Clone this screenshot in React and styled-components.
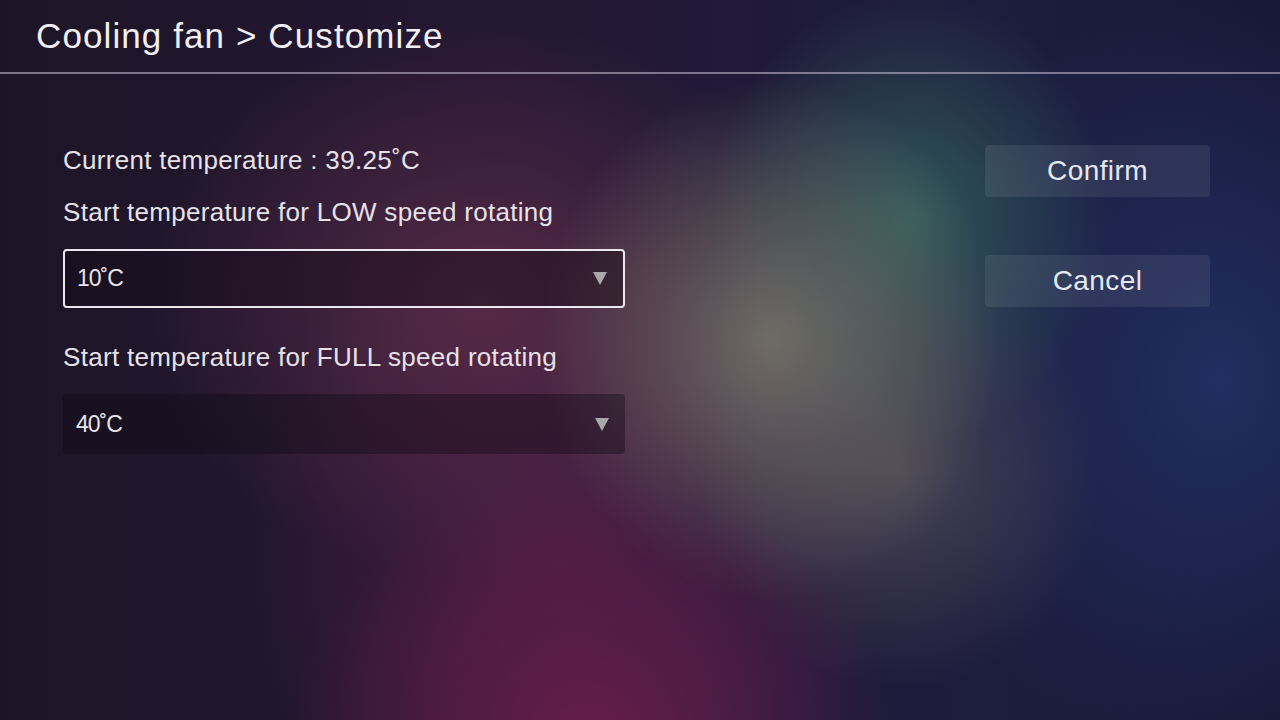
import React from 'react';
import styled, { createGlobalStyle } from 'styled-components';

const GlobalStyle = createGlobalStyle`
	html, body {
		margin: 0;
		padding: 0;
		width: 100%;
		height: 100%;
		overflow: hidden;
	}
	#root {
		height: 100%;
	}
`;

const StyledScreen = styled.div`

	width: 1280px;
	height: 720px;
	display: flex;
	flex-direction: column;
	font-family: 'Liberation Sans', Arial, sans-serif;
	color: #ebe7ee;
	background-color: #1a1530;
	background-image:
		radial-gradient(ellipse 300px 260px at 590px 740px, rgba(104, 28, 78, 0.95), rgba(104, 28, 78, 0) 100%),
		radial-gradient(ellipse 230px 260px at 770px 340px, rgba(122, 120, 108, 0.85), rgba(122, 120, 108, 0) 100%),
		radial-gradient(ellipse 200px 220px at 900px 470px, rgba(100, 96, 100, 0.6), rgba(100, 96, 100, 0) 100%),
		radial-gradient(ellipse 200px 230px at 910px 220px, rgba(52, 100, 96, 0.85), rgba(52, 100, 96, 0) 100%),
		radial-gradient(ellipse 340px 280px at 480px 300px, rgba(100, 48, 76, 0.75), rgba(100, 48, 76, 0) 100%),
		radial-gradient(ellipse 320px 360px at 560px 560px, rgba(82, 30, 72, 0.8), rgba(82, 30, 72, 0) 100%),
		radial-gradient(ellipse 300px 400px at 1220px 380px, rgba(34, 48, 100, 0.9), rgba(34, 48, 100, 0) 100%),
		linear-gradient(90deg, #1d1527 0%, #241733 40%, #1c1d3e 80%, #171735 100%);

`;

const StyledHeader = styled.header`

	height: 72px;
	display: flex;
	align-items: center;
	padding-left: 36px;
	border-bottom: 2px solid rgba(190, 178, 200, 0.6);

`;

const StyledTitle = styled.h1`
	margin: 0;
	font-size: 35px;
	font-weight: normal;
	letter-spacing: 1.1px;
	color: #f2eff4;
`;

const StyledBody = styled.main`

	display: flex;
	justify-content: space-between;
	padding: 70px 70px 0 63px;

`;

const StyledForm = styled.section`

	width: 562px;
	display: flex;
	flex-direction: column;

`;

const StyledLabel = styled.div`
	height: 32px;
	line-height: 32px;
	font-size: 26px;
	letter-spacing: 0.3px;
	color: #e6e2e8;
	margin-top: ${props => props.$gap}px;
`;

const StyledSelect = styled.div`

	box-sizing: border-box;
	height: ${props => props.$active ? 59 : 60}px;
	margin-top: 21px;
	display: flex;
	align-items: center;
	justify-content: space-between;
	padding: 0 16px 0 ${props => props.$active ? 12 : 13}px;
	border-radius: 4px;
	border: ${props => props.$active ? '2px solid #ece6ee' : 'none'};
	background: ${props => props.$active ? 'rgba(20, 12, 22, 0.45)' : 'rgba(16, 10, 20, 0.4)'};
	font-size: 23px;
	letter-spacing: -1px;
	color: #e8e4ea;

`;

const StyledArrow = styled.span`
	width: 0;
	height: 0;
	border-left: 7px solid transparent;
	border-right: 7px solid transparent;
	border-top: 13px solid #aaa6ac;
`;

const StyledActions = styled.aside`

	width: 225px;
	display: flex;
	flex-direction: column;
	gap: 58px;
	padding-top: 1px;

`;

const StyledButton = styled.button`
	height: 52px;
	border: none;
	border-radius: 4px;
	background: rgba(255, 255, 255, 0.08);
	font-family: 'Liberation Sans', Arial, sans-serif;
	font-size: 28px;
	letter-spacing: 0.4px;
	color: #e4e9f0;
	cursor: pointer;
`;

const thresholds = [
	{ label: 'Start temperature for LOW speed rotating', value: '10˚C', active: true, gap: 20 },
	{ label: 'Start temperature for FULL speed rotating', value: '40˚C', active: false, gap: 33 }
];

function App() {

	return (
		<>
			<GlobalStyle />
			<StyledScreen>
				<StyledHeader>
					<StyledTitle>Cooling fan &gt; Customize</StyledTitle>
				</StyledHeader>
				<StyledBody>
					<StyledForm>
						<StyledLabel $gap={0}>Current temperature : 39.25˚C</StyledLabel>
						{thresholds.map(item => (
							<React.Fragment key={item.label}>
								<StyledLabel $gap={item.gap}>{item.label}</StyledLabel>
								<StyledSelect $active={item.active}>
									<span>{item.value}</span>
									<StyledArrow />
								</StyledSelect>
							</React.Fragment>
						))}
					</StyledForm>
					<StyledActions>
						<StyledButton>Confirm</StyledButton>
						<StyledButton>Cancel</StyledButton>
					</StyledActions>
				</StyledBody>
			</StyledScreen>
		</>
	);
}

export default App;
